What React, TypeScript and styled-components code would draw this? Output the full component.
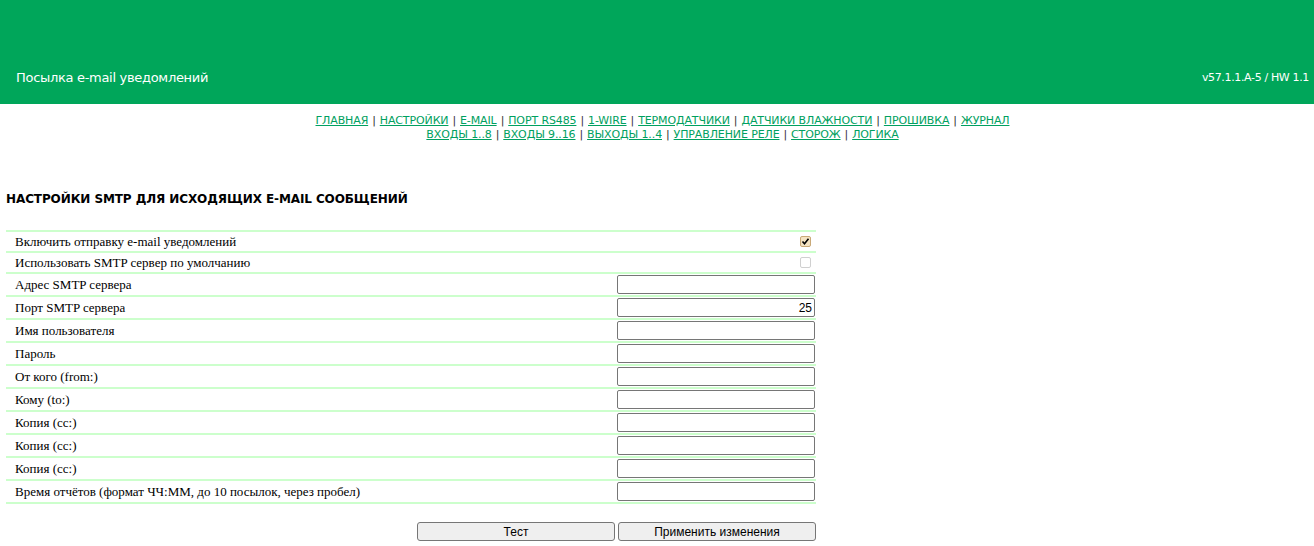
import React from "react";
import styled, { createGlobalStyle } from "styled-components";

const GlobalStyle = createGlobalStyle`
  html, body {
    margin: 0;
    padding: 0;
    background: #ffffff;
  }
  body {
    font-family: "DejaVu Sans", Verdana, sans-serif;
  }
`;

const Header = styled.header`
  background: #00a65a;
  height: 104px;
  display: flex;
  align-items: flex-end;
  justify-content: space-between;
  padding: 0 5px 18px 16px;
  box-sizing: border-box;
  color: #ffffff;
`;

const Title = styled.div`
  font-size: 13px;
  line-height: 16px;
  letter-spacing: -0.3px;
`;

const Version = styled.div`
  font-size: 11px;
  line-height: 16px;
  letter-spacing: -0.35px;
`;

const Nav = styled.nav`
  text-align: center;
  font-size: 11px;
  line-height: 14px;
  padding: 10px 0 0 11px;
  color: #333333;
  letter-spacing: -0.12px;
`;

const NavLine = styled.div``;

const NavLink = styled.a`
  color: #00a060;
  text-decoration: underline;
`;

const Sep = styled.span`
  padding: 0 4px;
`;

const Content = styled.main`
  padding: 0 6px;
`;

const Heading = styled.h1`
  font-size: 12px;
  font-weight: bold;
  margin: 0;
  padding-top: 49px;
  line-height: 16px;
  letter-spacing: -0.1px;
  color: #000000;
`;

const Table = styled.div`
  width: 810px;
  margin-top: 23px;
  border-bottom: 2px solid #ccffcc;
`;

const Row = styled.div<{ $tall?: boolean }>`
  display: flex;
  align-items: center;
  justify-content: space-between;
  border-top: 2px solid #ccffcc;
  height: ${(p) => (p.$tall ? 21 : 19)}px;
  padding-left: 9px;
`;

const Label = styled.span`
  font-family: "Liberation Serif", "Times New Roman", serif;
  font-size: 13px;
  color: #000000;
`;

const Box = styled.span<{ $checked?: boolean }>`
  width: 11px;
  height: 11px;
  border-radius: 2px;
  margin-right: 5px;
  box-sizing: border-box;
  display: flex;
  align-items: center;
  justify-content: center;
  background: ${(p) => (p.$checked ? "#f4e3c2" : "#ffffff")};
  border: 1px solid ${(p) => (p.$checked ? "#c9a978" : "#d0d0d0")};
`;

const Field = styled.input`
  width: 198px;
  height: 19px;
  box-sizing: border-box;
  border: 1px solid #767676;
  border-radius: 2px;
  margin: 0 1px 0 0;
  padding: 0 2px;
  font-family: "Liberation Sans", Arial, sans-serif;
  font-size: 12px;
  text-align: right;
  background: #ffffff;
`;

const Actions = styled.div`
  width: 810px;
  display: flex;
  justify-content: flex-end;
  gap: 3px;
  margin-top: 18px;
`;

const Button = styled.button`
  width: 198px;
  height: 19px;
  box-sizing: border-box;
  background: #efefef;
  border: 1px solid #767676;
  border-radius: 3px;
  font-family: "Liberation Sans", Arial, sans-serif;
  font-size: 12px;
  color: #000000;
  padding: 0;
`;

const line1 = [
  "ГЛАВНАЯ",
  "НАСТРОЙКИ",
  "E-MAIL",
  "ПОРТ RS485",
  "1-WIRE",
  "ТЕРМОДАТЧИКИ",
  "ДАТЧИКИ ВЛАЖНОСТИ",
  "ПРОШИВКА",
  "ЖУРНАЛ",
];
const line2 = [
  "ВХОДЫ 1..8",
  "ВХОДЫ 9..16",
  "ВЫХОДЫ 1..4",
  "УПРАВЛЕНИЕ РЕЛЕ",
  "СТОРОЖ",
  "ЛОГИКА",
];

const fields: { label: string; value?: string }[] = [
  { label: "Адрес SMTP сервера" },
  { label: "Порт SMTP сервера", value: "25" },
  { label: "Имя пользователя" },
  { label: "Пароль" },
  { label: "От кого (from:)" },
  { label: "Кому (to:)" },
  { label: "Копия (cc:)" },
  { label: "Копия (cc:)" },
  { label: "Копия (cc:)" },
  { label: "Время отчётов (формат ЧЧ:ММ, до 10 посылок, через пробел)" },
];

const NavRow = ({ items }: { items: string[] }) => (
  <NavLine>
    {items.map((t, i) => (
      <React.Fragment key={t}>
        {i > 0 && <Sep>|</Sep>}
        <NavLink href="#">{t}</NavLink>
      </React.Fragment>
    ))}
  </NavLine>
);

const App = () => (
  <>
    <GlobalStyle />
    <Header>
      <Title>Посылка e-mail уведомлений</Title>
      <Version>v57.1.1.A-5 / HW 1.1</Version>
    </Header>
    <Nav>
      <NavRow items={line1} />
      <NavRow items={line2} />
    </Nav>
    <Content>
      <Heading>НАСТРОЙКИ SMTP ДЛЯ ИСХОДЯЩИХ E-MAIL СООБЩЕНИЙ</Heading>
      <Table>
        <Row>
          <Label>Включить отправку e-mail уведомлений</Label>
          <Box $checked>
            <svg width="9" height="9" viewBox="0 0 9 9">
              <path d="M1.5 4.5 L3.5 6.8 L7.5 1.8" fill="none" stroke="#000" strokeWidth="1.6" />
            </svg>
          </Box>
        </Row>
        <Row>
          <Label>Использовать SMTP сервер по умолчанию</Label>
          <Box />
        </Row>
        {fields.map((f, i) => (
          <Row $tall key={i}>
            <Label>{f.label}</Label>
            <Field defaultValue={f.value ?? ""} />
          </Row>
        ))}
      </Table>
      <Actions>
        <Button>Тест</Button>
        <Button>Применить изменения</Button>
      </Actions>
    </Content>
  </>
);

export default App;
